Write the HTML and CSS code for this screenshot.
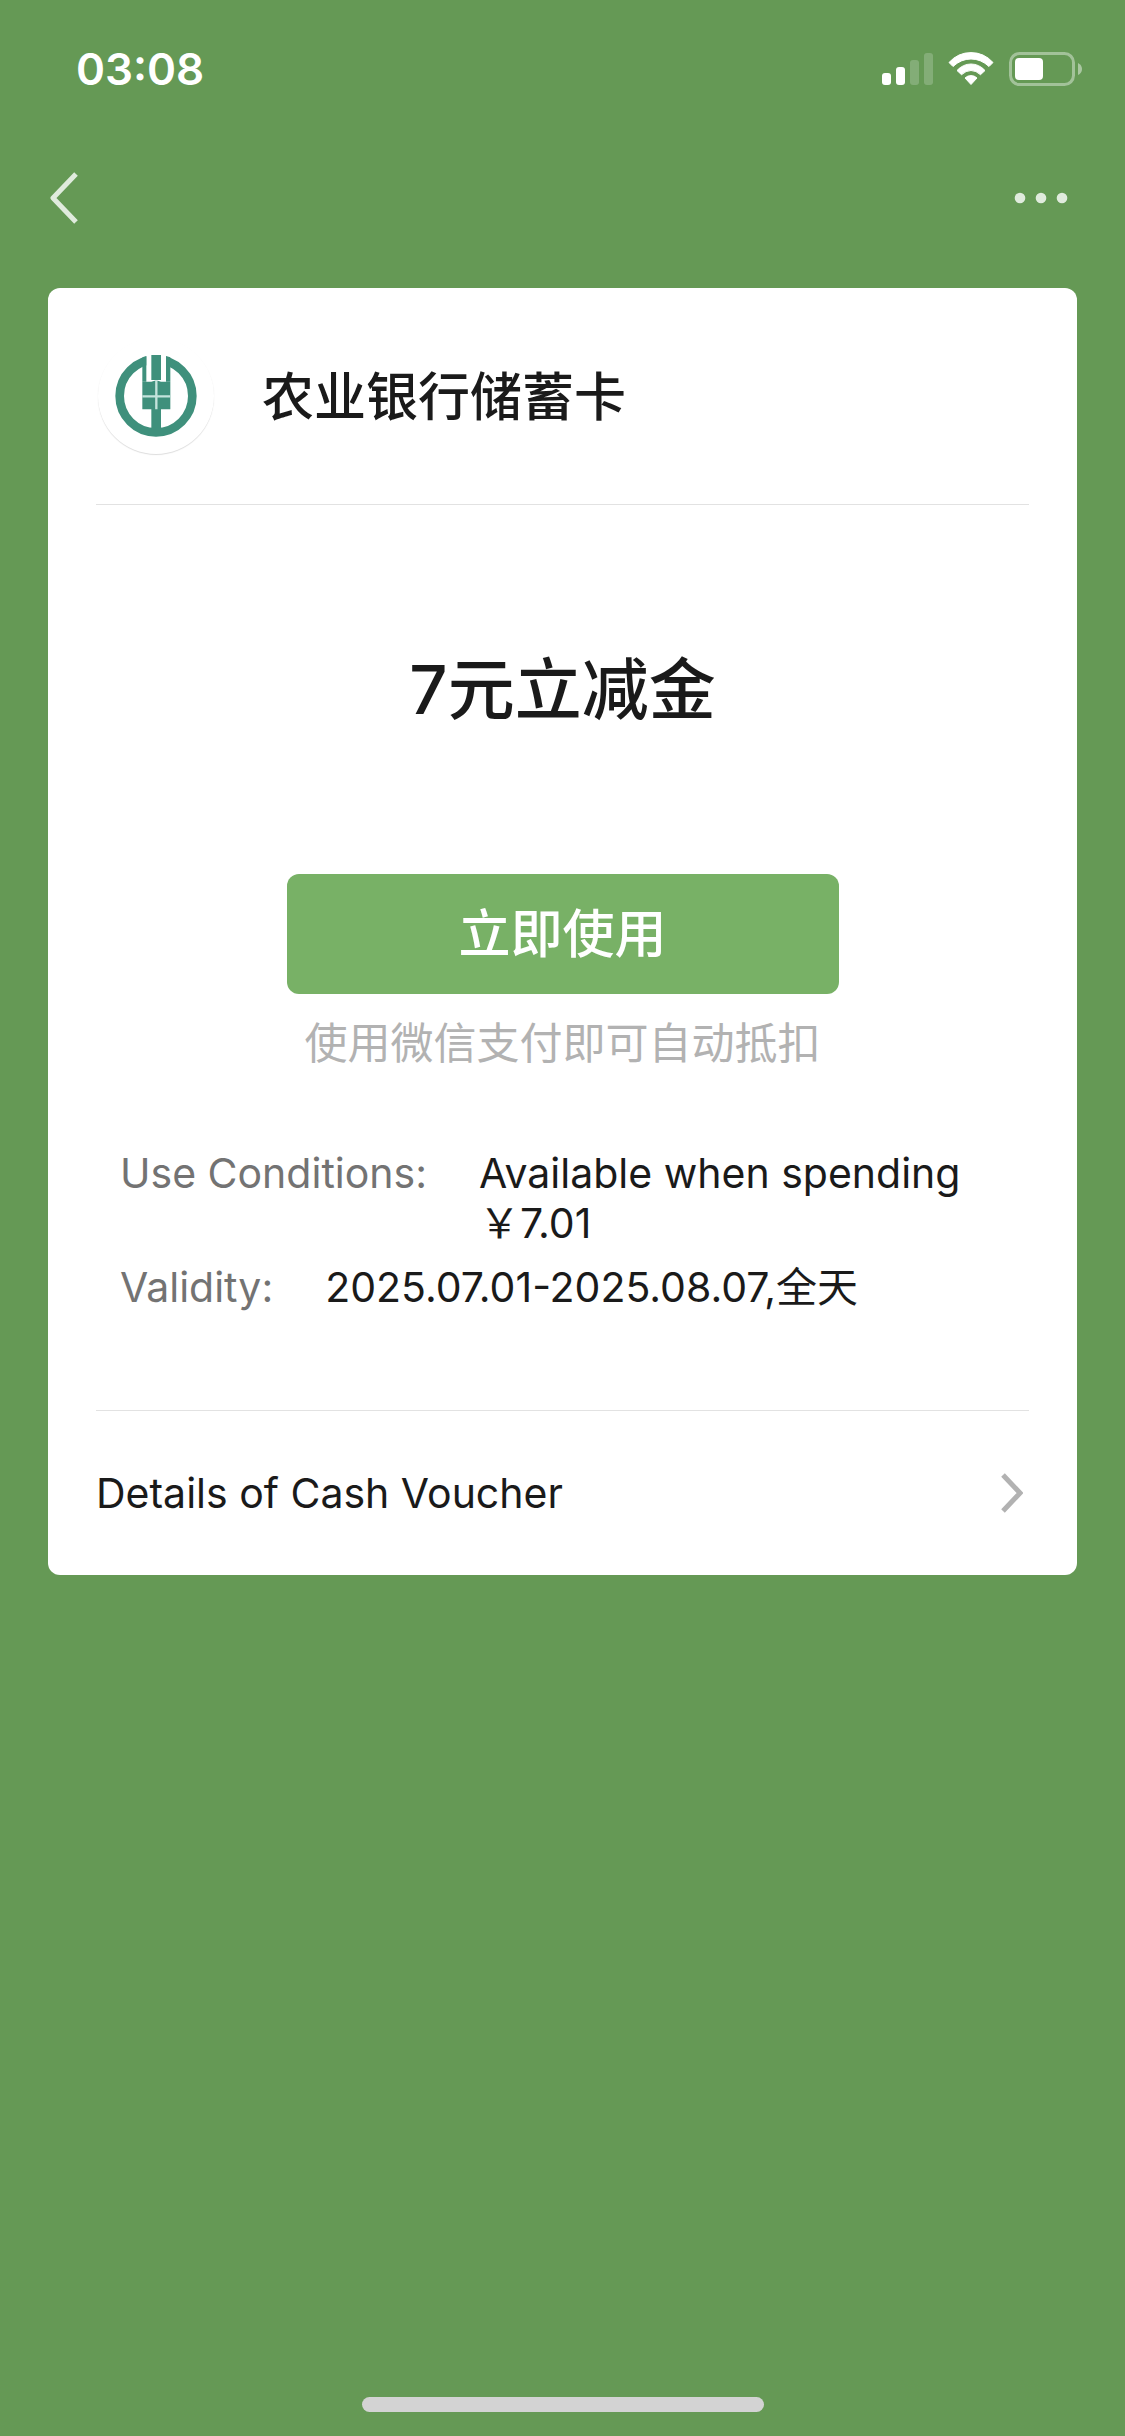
FILE: index.html
```html
<!DOCTYPE html>
<html lang="zh-CN">
<head>
<meta charset="utf-8">
<meta name="viewport" content="width=device-width, initial-scale=1">
<title>7元立减金</title>
<link rel="stylesheet" href="styles.css">
</head>
<body class="page">
  <div class="status-bar">
    <time class="clock">03:08</time>
    <div class="status-icons">
      <svg width="51" height="34" viewBox="0 0 51 34" fill="#fff" aria-hidden="true">
        <rect x="0" y="21" width="9" height="12" rx="3"/>
        <rect x="14" y="15" width="9" height="18" rx="3"/>
        <rect x="28" y="8" width="9" height="25" rx="3" opacity=".2"/>
        <rect x="42" y="1" width="9" height="32" rx="3" opacity=".2"/>
      </svg>
      <svg width="46" height="34" viewBox="0 0 46 34" aria-hidden="true">
        <g fill="#fff" stroke="#fff" stroke-width="1" stroke-linejoin="round">
          <path d="M1 10.500Q10 .6 23 .6T45 10.500L41 14.500Q33 7 23 7T5 14.500Z"/>
          <path d="M9 18.500Q15 12 23 12T37 18.500L32.500 22.700Q28 18.500 23 18.500T13.500 22.700Z"/>
          <path d="M17 26Q19.500 23.600 23 23.600T29 26L23 32.500Z"/>
        </g>
      </svg>
      <svg class="battery" width="74" height="34" viewBox="0 0 74 34" aria-hidden="true">
        <rect x="1.500" y="1.500" width="63" height="31" rx="9" fill="none" stroke="#fff" stroke-opacity=".4" stroke-width="3"/>
        <rect x="6" y="6" width="28" height="22" rx="4" fill="#fff"/>
        <path d="M69 11Q73 13 73 17T69 23Z" fill="#fff" fill-opacity=".45"/>
      </svg>
    </div>
  </div>

  <nav class="nav-bar">
    <button class="icon-button" type="button" aria-label="Back">
      <svg width="28" height="52" viewBox="0 0 28 52" aria-hidden="true">
        <path d="M26 2 3 26 26 50" fill="none" stroke="#e0ebdd" stroke-width="5" stroke-linejoin="round"/>
      </svg>
    </button>
    <button class="icon-button" type="button" aria-label="More">
      <svg width="54" height="12" viewBox="0 0 54 12" fill="#e0ebdd" aria-hidden="true">
        <circle cx="6" cy="6" r="5.300"/><circle cx="27" cy="6" r="5.300"/><circle cx="48" cy="6" r="5.300"/>
      </svg>
    </button>
  </nav>

  <main class="card">
    <header class="card-header">
      <span class="logo">
        <svg width="82" height="82" viewBox="105 105 246 246" aria-hidden="true">
          <circle cx="228" cy="228" r="109" fill="none" stroke="#3f907c" stroke-width="26"/>
          <path d="M199 95H258V187H199Z" fill="#fff"/>
          <g fill="#3f907c">
            <path d="M187 112 199 108V185H187ZM258 108 271 112V185H258Z"/>
            <path d="M214 105H243V180H214Z"/>
            <path d="M187 185H214L224 182H234L243 185H271V268H187Z"/>
            <path d="M214 266H243V330H214Z"/>
          </g>
          <path d="M229 180V268M187 229H271" stroke="#c4e3dc" stroke-width="7"/>
        </svg>
      </span>
      <h2 class="merchant">农业银行储蓄卡</h2>
    </header>

    <section class="voucher">
      <h1 class="amount">7元立减金</h1>
      <button class="use-button" type="button">立即使用</button>
      <p class="hint">使用微信支付即可自动抵扣</p>
      <dl class="terms">
        <div class="term">
          <dt>Use Conditions:</dt>
          <dd>Available when spending ￥7.01</dd>
        </div>
        <div class="term">
          <dt>Validity:</dt>
          <dd>2025.07.01-2025.08.07,全天</dd>
        </div>
      </dl>
    </section>

    <a class="details" href="#details">
      Details of Cash Voucher
      <svg width="22" height="40" viewBox="0 0 22 40" aria-hidden="true">
        <path d="M2 2 19 20 2 38" fill="none" stroke="#b2b2b2" stroke-width="5"/>
      </svg>
    </a>
  </main>

  <div class="home-indicator"></div>
</body>
</html>
```
FILE: styles.css
```css
* {
  box-sizing: border-box;
}

.page {
  display: flex;
  flex-direction: column;
  min-height: 100vh;
  margin: 0;
  background: #659955;
  color: #1a1a1a;
  font-family: Inter, "Noto Sans CJK SC", sans-serif;
  font-size: 41px;
  line-height: 50px;
}

.status-bar {
  display: flex;
  align-items: center;
  justify-content: space-between;
  height: 138px;
  padding: 0 42px 0 76px;
  color: #fff;
}

.clock {
  font-size: 44px;
  font-weight: 600;
}

.status-icons {
  display: flex;
  gap: 15px;
}

.nav-bar {
  display: flex;
  align-items: center;
  justify-content: space-between;
  height: 120px;
  padding: 0 57px 0 50px;
}

.icon-button {
  display: flex;
  padding: 0;
  border: 0;
  background: none;
}

.card {
  margin: 30px 48px 0;
  padding: 0 48px;
  border-radius: 12px;
  background: #fff;
}

.card-header {
  display: flex;
  align-items: center;
  gap: 48px;
  height: 217px;
  border-bottom: 1px solid #e2e2e2;
}

.logo {
  display: flex;
  align-items: center;
  justify-content: center;
  width: 116px;
  height: 116px;
  margin-left: 2px;
  border-radius: 50%;
  box-shadow: 0 1px 1px #ddd;
}

.merchant {
  margin: 0;
  padding-top: 4px;
  font-size: 52px;
  font-weight: 500;
}

.voucher {
  display: flex;
  flex-direction: column;
  align-items: center;
  padding: 145px 24px 98px;
  border-bottom: 1px solid #e2e2e2;
}

.amount {
  margin: 0;
  font-size: 67px;
  font-weight: 500;
  line-height: 80px;
}

.use-button {
  width: 552px;
  max-width: 100%;
  height: 120px;
  margin-top: 144px;
  padding: 2px 0 0;
  border: 0;
  border-radius: 12px;
  background: #78b166;
  color: #fff;
  font: inherit;
  font-size: 52px;
  font-weight: 500;
}

.hint {
  margin: 24px 0 0;
  color: #b2b2b2;
  font-size: 43px;
}

.terms {
  align-self: stretch;
  display: flex;
  flex-direction: column;
  gap: 14px;
  margin: 80px 0 0;
}

.term {
  display: flex;
  gap: 52px;
}

.term dt {
  flex: none;
  color: #737373;
}

.term dd {
  margin: 0;
}

.details {
  display: flex;
  align-items: center;
  justify-content: space-between;
  height: 164px;
  padding-right: 6px;
  color: inherit;
  text-decoration: none;
}

.home-indicator {
  width: 402px;
  height: 15px;
  margin: auto auto 24px;
  border-radius: 8px;
  background: #d3d3d3;
}
```
